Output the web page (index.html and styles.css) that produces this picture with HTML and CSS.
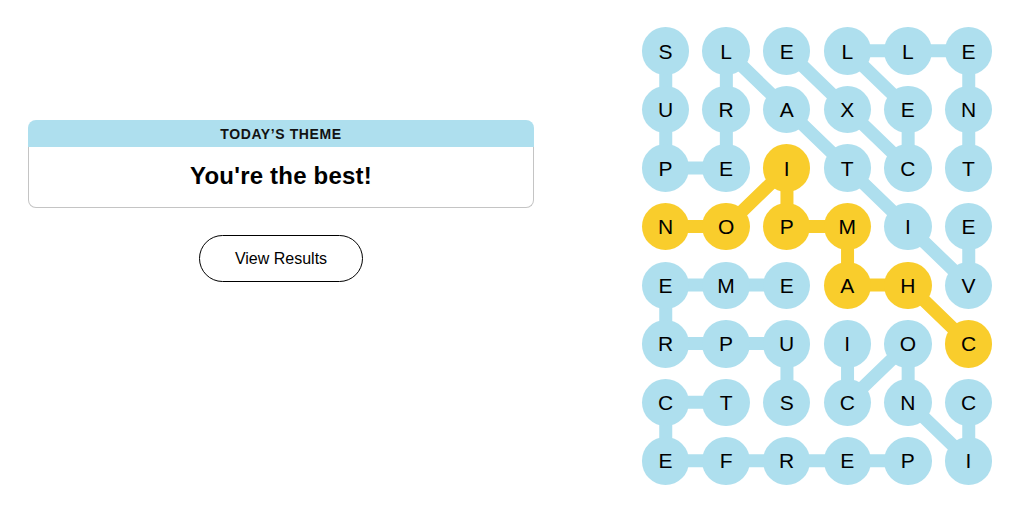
FILE: index.html
```html
<!DOCTYPE html>
<html lang="en">
<head>
<meta charset="utf-8">
<title>Strands</title>
<link rel="stylesheet" href="styles.css">
</head>
<body>
<main class="page">
  <section class="left">
    <div class="theme-card">
      <div class="theme-head">TODAY’S THEME</div>
      <div class="theme-body">You're the best!</div>
    </div>
    <button class="results-btn" type="button">View Results</button>
  </section>
  <section class="board">
    <svg class="links" width="351" height="458" viewBox="0 0 351 458" aria-hidden="true">
      <g transform="translate(23.75 23.75) scale(60.6 58.57)" fill="none" stroke-linecap="round" stroke-linejoin="round">
        <g stroke="#aedfee">
          <polyline vector-effect="non-scaling-stroke" stroke-width="13" points="0,0 0,1 0,2 1,2 1,1 1,0 2,1 3,2 4,3 5,4 5,3"/>
          <polyline vector-effect="non-scaling-stroke" stroke-width="13" points="2,0 3,1 4,2 4,1 3,0 4,0 5,0 5,1 5,2"/>
          <polyline vector-effect="non-scaling-stroke" stroke-width="13" points="2,6 2,5 1,5 0,5 0,4 1,4 2,4"/>
          <polyline vector-effect="non-scaling-stroke" stroke-width="13" points="4,7 3,7 2,7 1,7 0,7 0,6 1,6"/>
          <polyline vector-effect="non-scaling-stroke" stroke-width="13" points="3,5 3,6 4,5 4,6 5,7 5,6"/>
        </g>
        <polyline vector-effect="non-scaling-stroke" stroke="#f9cd2c" stroke-width="13" points="5,5 4,4 3,4 3,3 2,3 2,2 1,3 0,3"/>
      </g>
    </svg>
    <div class="grid">
      <span class="cell">S</span><span class="cell">L</span><span class="cell">E</span><span class="cell">L</span><span class="cell">L</span><span class="cell">E</span>
      <span class="cell">U</span><span class="cell">R</span><span class="cell">A</span><span class="cell">X</span><span class="cell">E</span><span class="cell">N</span>
      <span class="cell">P</span><span class="cell">E</span><span class="cell gold">I</span><span class="cell">T</span><span class="cell">C</span><span class="cell">T</span>
      <span class="cell gold">N</span><span class="cell gold">O</span><span class="cell gold">P</span><span class="cell gold">M</span><span class="cell">I</span><span class="cell">E</span>
      <span class="cell">E</span><span class="cell">M</span><span class="cell">E</span><span class="cell gold">A</span><span class="cell gold">H</span><span class="cell">V</span>
      <span class="cell">R</span><span class="cell">P</span><span class="cell">U</span><span class="cell">I</span><span class="cell">O</span><span class="cell gold">C</span>
      <span class="cell">C</span><span class="cell">T</span><span class="cell">S</span><span class="cell">C</span><span class="cell">N</span><span class="cell">C</span>
      <span class="cell">E</span><span class="cell">F</span><span class="cell">R</span><span class="cell">E</span><span class="cell">P</span><span class="cell">I</span>
    </div>
  </section>
</main>
</body>
</html>
```

FILE: styles.css
```css
* { box-sizing: border-box; }

html, body {
  margin: 0;
  padding: 0;
  background: #ffffff;
}

body {
  width: 1024px;
  height: 514px;
  overflow: hidden;
  font-family: "Liberation Sans", Arial, sans-serif;
  color: #000;
}

.page {
  display: flex;
  align-items: flex-start;
}

.left {
  width: 506px;
  margin-left: 28px;
  padding-top: 120px;
  display: flex;
  flex-direction: column;
  align-items: center;
}

.theme-card {
  width: 100%;
  display: flex;
  flex-direction: column;
}

.theme-head {
  height: 27px;
  background: #aedfee;
  border-radius: 8px 8px 0 0;
  display: flex;
  align-items: center;
  justify-content: center;
  font-size: 14px;
  font-weight: 700;
  letter-spacing: 0.6px;
  color: #121212;
  padding-top: 1px;
}

.theme-body {
  height: 61px;
  border: 1px solid #c4c4c4;
  border-top: none;
  border-radius: 0 0 8px 8px;
  display: flex;
  align-items: center;
  justify-content: center;
  font-size: 24px;
  font-weight: 700;
  letter-spacing: 0.2px;
  padding-bottom: 2px;
}

.results-btn {
  margin-top: 27px;
  width: 164px;
  height: 47px;
  border: 1px solid #000;
  border-radius: 24px;
  background: #fff;
  font-family: "Liberation Sans", Arial, sans-serif;
  font-size: 16px;
  color: #000;
  padding: 0;
}

.board {
  position: relative;
  margin-left: 107.75px;
  margin-top: 27.25px;
  width: 351px;
  height: 458px;
}

.links {
  position: absolute;
  left: 0;
  top: 0;
}

.grid {
  position: relative;
  display: grid;
  grid-template-columns: repeat(6, 47.5px);
  grid-template-rows: repeat(8, 47.5px);
  column-gap: 13.1px;
  row-gap: 11.07px;
}

.cell {
  width: 47.5px;
  height: 47.5px;
  border-radius: 50%;
  background: #aedfee;
  display: flex;
  align-items: center;
  justify-content: center;
  font-size: 21px;
  line-height: 1;
  color: #000;
}

.cell.gold {
  background: #f9cd2c;
}
```
